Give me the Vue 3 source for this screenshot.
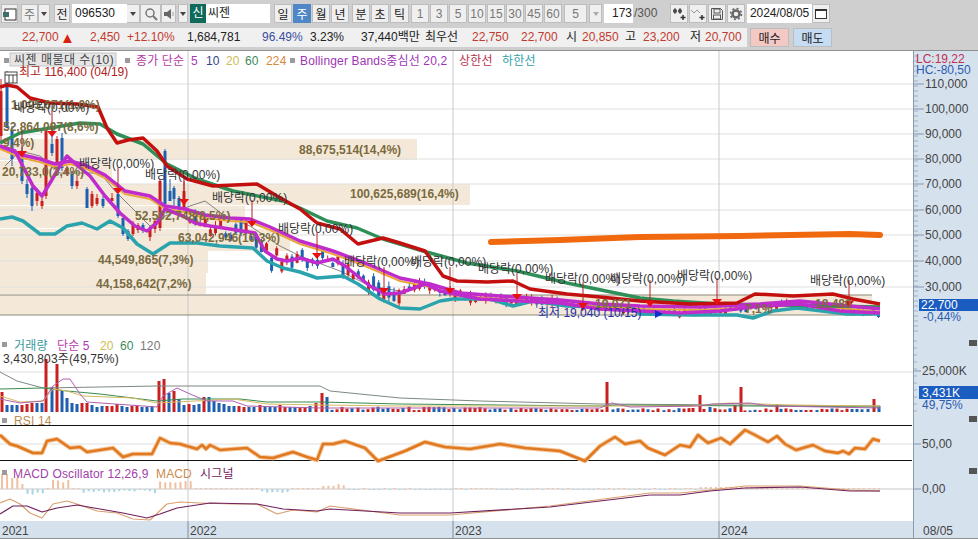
<script setup>
// 주봉 차트 화면 - 툴바 + 가격/거래량/RSI/MACD 패널
// 차트 좌표는 화면 좌표 그대로 사용 (viewBox로 패널 위치 맞춤)
const periods = [
  { t: "일", w: 18 }, { t: "주", w: 18, on: true }, { t: "월", w: 18 }, { t: "년", w: 18, gap: 1 },
  { t: "분", w: 18, gap: 3 }, { t: "초", w: 18 }, { t: "틱", w: 19 },
];
const minutes = ["1", "3", "5", "10", "15", "30", "45", "60"];

const stats = [
  { t: "22,700", x: 22, c: "red" }, { t: "▲", x: 60, c: "redstrong" }, { t: "2,450", x: 90, c: "red" },
  { t: "+12.10%", x: 127, c: "red" }, { t: "1,684,781", x: 187 }, { t: "96.49%", x: 262, c: "blue" },
  { t: "3.23%", x: 310 }, { t: "37,440백만", x: 361 }, { t: "최우선", x: 425 }, { t: "22,750", x: 472, c: "red" },
  { t: "22,700", x: 521, c: "red" }, { t: "시", x: 566 }, { t: "20,850", x: 582, c: "red" }, { t: "고", x: 625 },
  { t: "23,200", x: 643, c: "red" }, { t: "저", x: 690 }, { t: "20,700", x: 705, c: "red" },
];
const statCells = stats.map((s, i) => ({ ...s, w: (i < stats.length - 1 ? stats[i + 1].x : 747) - s.x }));

const pts = (a) => a.map((p) => p.join(",")).join(" ");

const redBand = [[0,86],[7,84],[17,86],[30,97],[50,102],[77,103],[98,106],[107,127],[117,142],[128,139],[143,137],[157,150],[167,165],[187,178],[213,185],[257,183],[277,195],[300,208],[317,222],[340,228],[358,243],[383,237],[400,242],[425,250],[443,275],[457,280],[487,281],[513,280],[530,288],[567,293],[600,296],[640,300],[690,303],[737,302],[755,293],[793,295],[833,293],[853,298],[880,303]];
const greenLine = [[0,142],[20,132],[50,127],[80,122],[100,123],[117,133],[143,143],[167,163],[197,178],[233,190],[283,200],[300,207],[327,220],[357,227],[383,238],[423,250],[467,262],[517,270],[567,282],[640,297],[673,300],[720,303],[780,304],[880,306]];
const upperMag = [[0,145],[22,154],[40,158],[55,163],[70,160],[85,164],[105,174],[125,190],[150,195],[165,205],[185,208],[205,214],[230,217],[250,218],[270,226],[300,240],[333,250],[365,262],[400,277],[430,283],[460,292],[500,295],[560,299],[600,303],[640,305],[700,306],[760,303],[800,300],[850,305],[880,308]];
const orangeThin = upperMag.map(([x, y]) => [x, y + 3]);
const lowerMag = [[0,145],[15,150],[33,185],[42,195],[50,182],[60,165],[67,155],[78,165],[90,175],[105,195],[120,212],[135,225],[147,230],[157,222],[165,208],[183,215],[195,222],[210,225],[230,228],[255,232],[265,250],[277,258],[287,260],[300,257],[317,262],[333,258],[345,265],[370,285],[385,293],[400,292],[425,283],[440,290],[480,298],[520,300],[560,302],[600,308],[640,310],[680,312],[720,310],[760,305],[800,303],[840,310],[880,312]];
const tealLine = [[0,218],[12,216],[23,220],[40,233],[55,233],[67,225],[82,222],[97,228],[110,220],[123,227],[137,243],[153,253],[170,242],[197,242],[220,245],[253,247],[267,260],[283,267],[300,271],[317,277],[343,275],[358,283],[380,298],[400,307],[420,308],[440,300],[453,298],[490,298],[513,305],[533,300],[567,305],[633,307],[640,313],[690,314],[737,314],[753,317],[773,310],[797,307],[847,313],[880,313]];
const thinGray = [[5,165],[20,150],[40,155],[60,172],[75,172],[100,172],[115,190],[135,210],[150,225],[165,215],[190,205],[205,200],[225,215],[250,225],[280,245],[300,255],[340,270],[370,285],[400,290]];
const longOrange = [[491,241],[560,239],[640,236],[740,235],[790,234],[850,233],[880,234]];

// 매물대 (y, 높이, 끝 x)
const profile = [
  [138, 21, 417], [160, 22, 112], [183, 21, 470], [205, 22, 245], [228, 22, 290], [250, 22, 208], [272, 21, 206], [294, 20, 872],
];
const grid = [83, 108, 133, 158, 183, 209, 234, 260, 286];

// 가까운 구간 보간
const interp = (line, x) => {
  for (let i = 1; i < line.length; i++) {
    if (x <= line[i][0]) {
      const [x0, y0] = line[i - 1];
      const [x1, y1] = line[i];
      return y0 + ((y1 - y0) * (x - x0)) / (x1 - x0);
    }
  }
  return line[line.length - 1][1];
};
const rnd = (n) => {
  const v = Math.sin(n * 12.9898) * 43758.5453;
  return v - Math.floor(v);
};

// x, 고가, 저가, 몸통 위, 몸통 아래, 양봉 여부
const handCandles = [
  [1,78,140,90,135,1],[7,70,127,73,127,0],[12,125,165,130,158,0],[22,146,183,150,180,0],[27,178,197,183,193,0],[32,183,210,187,205,0],[37,190,205,192,200,1],
  [42,195,208,200,205,1],[46,128,198,130,195,1],[52,128,155,143,152,0],[57,135,165,138,163,1],[62,132,170,137,167,0],[67,165,175,167,172,1],[72,170,188,173,185,0],[77,175,188,180,185,1],
  [87,186,207,188,207,0],[92,190,207,193,205,1],[97,193,205,197,203,1],[103,195,207,198,205,0],[112,192,200,197,200,1],[118,190,217,193,215,0],[123,217,235,217,233,0],[128,228,240,230,238,0],
  [133,220,235,223,233,1],[138,222,232,224,229,1],[143,222,232,224,230,0],[150,225,240,228,236,1],[155,218,232,220,228,1],[160,178,230,180,227,1],[165,148,205,150,203,0],[170,178,200,190,200,0],
  [174,185,205,187,198,0],[179,195,210,197,208,0],[184,180,210,190,207,1],
];
const candles = [...handCandles];
for (let x = 190, i = 0; x < 882; x += 5.1, i++) {
  const mid = interp(lowerMag, x);
  const size = x < 400 ? 12 : x < 560 ? 6 : 3;
  const h = 2 + rnd(i) * size;
  const off = (rnd(i + 200) - 0.5) * (x < 400 ? 18 : 4);
  const wick = x < 560 ? 4 : 1.5;
  const top = mid + off - h / 2;
  candles.push([x, top - rnd(i + 50) * wick - 1, top + h + rnd(i + 70) * wick, top, top + h, rnd(i + 90) > 0.5 ? 1 : 0]);
}

// 배당락 라벨과 화살표
const divLabels = [[14,111],[79,167],[145,178],[212,201],[278,232],[344,265],[411,265],[478,272],[545,282],[610,282],[677,279],[810,284]];
const arrows = [[22,150],[52,130],[118,187],[184,198],[252,220],[317,252],[384,287],[450,287],[517,293],[583,302],[650,300],[717,298],[849,300]];
const priceTexts = [
  { t: "88,675,514(14,4%)", x: 299, y: 153 }, { t: "100,625,689(16,4%)", x: 350, y: 197 },
  { t: "20,733,0(3,4%)", x: 2, y: 175 }, { t: "52,502,748(8,5%)", x: 135, y: 219 },
  { t: "63,042,946(10,3%)", x: 178, y: 241 }, { t: "44,549,865(7,3%)", x: 98, y: 263 },
  { t: "44,158,642(7,2%)", x: 96, y: 287 }, { t: "1,095,671(1,0%)", x: 11, y: 108 },
  { t: "52,864,097(8,6%)", x: 3, y: 130 }, { t: "9,4%)", x: 3, y: 146 },
  { t: "19,071", x: 595, y: 307 }, { t: "7,1%", x: 745, y: 312 }, { t: "18,480", x: 815, y: 307 },
];

const mainTicks = [["110,000",87],["100,000",112],["90,000",137],["80,000",162],["70,000",187],["60,000",213],["50,000",238],["40,000",264],["30,000",290]];
const minor = (from, to, step) => {
  const out = [];
  for (let y = from; y < to; y += step) out.push(y);
  return out;
};

// 거래량
const volHand = [[2,20,1],[7,7,0],[12,7,0],[17,7,0],[22,7,1],[27,8,1],[32,9,1],[37,9,0],[42,9,0],[46,53,1],[52,25,0],[57,48,1],[62,22,0],[67,14,0],[72,9,0],[77,8,0],[82,9,1],[87,9,1],[92,7,0],[97,5,0],[102,6,0],[107,6,1],[112,6,1],[117,8,1],[122,6,0],[127,5,0],[132,6,1],[137,6,1],[142,5,0],[147,5,0],[152,6,0],[159,31,1],[164,33,1],[169,19,0],[174,21,1],[179,13,0],[184,7,0],[189,8,1],[194,7,0],[199,8,0],[204,15,1],[209,15,0],[214,11,0],[219,9,0],[224,8,0],[229,6,0],[234,6,0],[239,6,1],[244,5,1],[249,5,0],[254,5,0],[260,7,1],[265,6,0],[270,5,0],[275,5,0],[280,7,1],[285,5,1],[290,5,0],[295,5,0],[300,5,1],[305,5,1],[310,6,0],[316,9,1],[322,19,1],[327,15,0]];
const spikes = { 607: [30, 1], 700: [17, 1], 741: [25, 1], 777: [8, 1], 874: [13, 1], 879: [6, 0], 693: [4, 1], 735: [7, 1], 710: [5, 0] };
const volBars = [...volHand];
for (let x = 332, i = 0; x < 875; x += 5.1, i++) {
  const near = Object.keys(spikes).find((k) => Math.abs(k - x) < 2.6);
  if (near) continue;
  volBars.push([Math.round(x), 1.5 + rnd(i + 300) * (x < 480 ? 4 : 2.5), rnd(i + 400) > 0.5 ? 1 : 0]);
}
Object.keys(spikes).forEach((k) => volBars.push([+k, spikes[k][0], spikes[k][1]]));

const vol120 = [[0,371],[17,380],[43,387],[157,385],[320,385],[330,390],[400,397],[480,400],[600,403],[880,405]];
const vol60 = [[0,388],[43,387],[67,390],[100,393],[157,400],[183,398],[240,398],[267,401],[320,401],[400,403],[600,405],[620,404],[880,406]];
const vol20 = [[0,395],[20,401],[43,400],[53,388],[67,390],[83,395],[133,397],[157,402],[233,398],[267,403],[320,404],[400,405],[690,405],[730,402],[790,404],[880,405]];
const vol5 = [[0,398],[20,402],[43,400],[53,385],[63,378],[70,378],[80,393],[87,401],[157,406],[163,395],[177,387],[190,393],[207,400],[233,400],[247,405],[320,407],[600,407],[612,402],[630,406],[700,405],[712,403],[750,402],[770,405],[880,407]];

const rsi = [[0,434],[10,443],[17,445],[33,452],[42,452],[47,440],[57,438],[70,447],[80,446],[87,451],[113,447],[123,456],[133,453],[152,453],[160,437],[170,442],[180,443],[197,448],[202,444],[206,448],[210,444],[220,449],[233,448],[247,447],[260,456],[273,457],[293,451],[307,456],[317,459],[323,443],[333,443],[345,440],[365,447],[378,460],[405,450],[425,441],[445,446],[470,448],[500,443],[525,447],[560,450],[585,460],[600,445],[615,436],[625,443],[640,440],[648,447],[665,454],[680,444],[690,446],[698,434],[708,442],[721,437],[730,443],[745,429],[755,434],[768,441],[777,435],[785,443],[796,449],[813,444],[825,450],[838,452],[843,450],[849,453],[855,447],[865,448],[873,438],[880,440]];

const macdHist = [];
for (let x = 2, i = 0; x < 882; x += 5.1, i++) {
  let h = 1;
  if (x < 12) h = 15;
  else if (x < 20) h = 11;
  else if (x < 25) h = 5;
  else if (x < 45) h = -(3 + rnd(i) * 4);
  else if (x >= 50 && x < 72) h = 6 + rnd(i) * 3;
  else if (x >= 80 && x < 155) h = -(1 + rnd(i) * 3);
  else if (x >= 158 && x < 192) h = 6 + rnd(i) * 2;
  else if (x >= 260 && x < 290) h = -(2 + rnd(i) * 2);
  else if (x >= 320 && x < 345) h = 3 + rnd(i) * 3;
  else if (x >= 700 && x < 770) h = 2;
  else if (x >= 345 && x < 700) h = rnd(i) > 0.5 ? 1 : -1;
  macdHist.push([x, h]);
}
const macdLine = [[0,502],[10,498],[20,503],[30,512],[42,517],[53,503],[67,500],[80,504],[97,510],[117,512],[133,518],[150,519],[167,503],[180,501],[200,502],[233,503],[257,503],[277,513],[293,509],[317,511],[330,505],[400,514],[450,514],[550,505],[650,492],[680,492],[710,489],[745,485],[800,485],[850,489],[880,490]];
const macdSignal = [[0,513],[13,505],[27,505],[42,511],[57,507],[77,504],[100,508],[123,512],[147,517],[160,513],[177,507],[210,502],[257,503],[283,508],[317,510],[330,508],[400,512],[450,512],[550,506],[650,494],[680,494],[710,490],[745,487],[800,486],[850,490],[880,490]];

const vGrid = [188, 453, 719];
const years = [["2021",2],["2022",190],["2023",455],["2024",721]];
</script>

<template>
  <div class="screen">
    <div class="tools">
      <button class="b w17 first">
        <svg width="14" height="14" viewBox="0 0 14 14"><rect x="2" y="2" width="11" height="11" fill="#fff" stroke="#333"/><rect x="0" y="5" width="6" height="5" fill="#3c6f6a"/></svg>
      </button>
      <button class="b w17 gap3 dim">주</button>
      <button class="b w12 drop"></button>
      <button class="b w16 gap4">전</button>
      <div class="field w55 gap2">096530</div>
      <button class="b w13 drop flush"></button>
      <button class="b w21">
        <svg width="14" height="14" viewBox="0 0 14 14"><circle cx="6" cy="6" r="4" fill="none" stroke="#777" stroke-width="1.5"/><path d="M9 9l4 4" stroke="#777" stroke-width="2"/></svg>
      </button>
      <button class="b w15">
        <svg width="12" height="12" viewBox="0 0 12 12"><path d="M1 4h3l4-3v10L4 8H1z" fill="#666"/><path d="M10 4v4" stroke="#999"/></svg>
      </button>
      <button class="b w10 gap2 drop"></button>
      <div class="badge gap2">신</div>
      <div class="field name">씨젠</div>
      <button v-for="(p, i) in periods" :key="p.t" class="b" :class="{ on: p.on }"
        :style="{ width: p.w + 'px', marginLeft: (i === 0 ? 4 : p.gap === 3 ? 3 : 1) + 'px' }">{{ p.t }}</button>
      <button v-for="(m, i) in minutes" :key="m" class="b w18 dim thin" :class="i === 0 ? 'gap2' : 'gap1'">{{ m }}</button>
      <button class="b w23 gap2 dim">5</button>
      <button class="b w13 gap2 drop pale"></button>
      <div class="field w29 gap2 right">173</div>
      <span class="total">/300</span>
      <button class="b w18 gap11">
        <svg width="14" height="14" viewBox="0 0 14 14"><circle cx="3" cy="4" r="2" fill="#444"/><circle cx="8" cy="4" r="2" fill="#444"/><path d="M3 1v6M8 1v6" stroke="#444"/><path d="M11 8v5M8.500 10.500h5" stroke="#333" stroke-width="1.500"/></svg>
      </button>
      <button class="b w18 gap1">
        <svg width="14" height="14" viewBox="0 0 14 14"><path d="M0 3l3 3 3-3 3 3" fill="none" stroke="#999"/><path d="M11 8v5M8.500 10.500h5" stroke="#333" stroke-width="1.500"/></svg>
      </button>
      <button class="b w18 gap1">
        <svg width="14" height="14" viewBox="0 0 14 14"><path d="M1.500 1.500h9l2 2v9h-11z" fill="none" stroke="#555"/><rect x="4" y="2" width="6" height="4" fill="none" stroke="#555"/><rect x="3.500" y="8" width="7" height="4" fill="none" stroke="#555"/></svg>
      </button>
      <button class="b w18 gap1">
        <svg width="14" height="14" viewBox="0 0 14 14"><circle cx="7" cy="7" r="3.500" fill="none" stroke="#666" stroke-width="2.500"/><circle cx="7" cy="7" r="5.500" fill="none" stroke="#666" stroke-width="1.600" stroke-dasharray="2 2.300"/></svg>
      </button>
      <div class="field w65 gap2 date">2024/08/05</div>
      <button class="b w18">
        <svg width="14" height="13" viewBox="0 0 14 13"><rect x="1.500" y="2.500" width="11" height="9" fill="#fff" stroke="#333"/><rect x="1" y="2" width="12" height="2" fill="#333"/></svg>
      </button>
    </div>

    <div class="quote">
      <div class="cells">
        <span v-for="(s, i) in statCells" :key="i" :class="s.c" :style="{ width: s.w + 'px' }">{{ s.t }}</span>
      </div>
      <button class="trade buy">매수</button>
      <button class="trade sell">매도</button>
    </div>

    <!-- 가격 -->
    <div class="pane main">
      <svg class="plot" width="914" height="285" viewBox="0 50 914 285">
        <rect v-for="p in profile" :key="p[0]" x="0" :y="p[0]" :width="p[2]" :height="p[1]" fill="#f4e9d8" />
        <line v-for="y in grid" :key="y" x1="0" x2="914" :y1="y" :y2="y" stroke="#dfdfdf" />
        <line v-for="x in vGrid" :key="x" :x1="x" :x2="x" y1="50" y2="335" stroke="#c9c9c9" />
        <line x1="0" x2="872" y1="294" y2="294" stroke="#8c8778" />
        <line x1="0" x2="872" y1="314" y2="314" stroke="#8c8778" />
        <polyline :points="pts(thinGray)" fill="none" stroke="#666" stroke-width="0.8" />
        <g v-for="(c, i) in candles" :key="i">
          <line :x1="c[0]" :x2="c[0]" :y1="c[1]" :y2="c[2]" :stroke="c[5] ? '#c82020' : '#1f5fb0'" />
          <rect :x="c[0] - 1.500" :y="c[3]" width="3" :height="c[4] - c[3]" :fill="c[5] ? '#c82020' : '#1f5fb0'" />
        </g>
        <polyline :points="pts(tealLine)" class="ln" stroke="#2aa3ad" stroke-width="3.500" />
        <polyline :points="pts(orangeThin)" class="ln" stroke="#e8a63a" stroke-width="2" />
        <polyline :points="pts(greenLine)" class="ln" stroke="#2f8f58" stroke-width="3.500" />
        <polyline :points="pts(upperMag)" class="ln" stroke="#c02ccc" stroke-width="3.500" />
        <polyline :points="pts(lowerMag)" class="ln" stroke="#c02ccc" stroke-width="3.500" />
        <polyline :points="pts(redBand)" class="ln" stroke="#c40f0f" stroke-width="3.500" />
        <polyline :points="pts(longOrange)" class="ln" stroke="#f0690f" stroke-width="6" stroke-linecap="round" />
        <g v-for="a in arrows" :key="a[0]">
          <line :x1="a[0]" :x2="a[0]" :y1="a[1] - 21" :y2="a[1]" stroke="#b02020" />
          <polygon :points="`${a[0] - 5},${a[1]} ${a[0] + 5},${a[1]} ${a[0]},${a[1] + 6}`" fill="#e81010" />
        </g>
        <text v-for="(p, i) in priceTexts" :key="i" :x="p.x" :y="p.y" class="vol-label">{{ p.t }}</text>
        <text v-for="d in divLabels" :key="d[0]" :x="d[0]" :y="d[1]" class="div-label">배당락(0,00%)</text>
        <text x="538" y="316" class="low-label">최저 19,040 (10/15)</text>
        <polygon points="655,309 663,313 655,317" fill="#1030d0" />
        <rect x="10" y="52" width="106" height="13" fill="#e6e6e6" stroke="#c4c4c4" />
        <text x="19" y="75" class="high-label">최고 116,400 (04/19)</text>
        <rect x="5" y="71" width="12" height="11" fill="#fff" stroke="#444" />
        <path d="M5 74h12M9 74v8M13 74v8" stroke="#444" fill="none" />
        <rect x="4" y="57" width="5" height="5" fill="#9a9a9a" />
        <text x="14" y="63" class="lg first-lg" fill="#444">씨젠 매물대 수(10)</text>
        <rect x="125" y="57" width="5" height="5" fill="#9a9a9a" />
        <text x="136" y="64" class="lg" fill="#b53aa8">종가 단순</text>
        <text x="191" y="64" class="lg" fill="#a33ab0">5</text>
        <text x="206" y="64" class="lg" fill="#334488">10</text>
        <text x="226" y="64" class="lg" fill="#cdbb55">20</text>
        <text x="245" y="64" class="lg" fill="#3c8a5a">60</text>
        <text x="266" y="64" class="lg" fill="#d8883a">224</text>
        <rect x="290" y="57" width="5" height="5" fill="#9a9a9a" />
        <text x="300" y="64" class="lg" fill="#a034b8">Bollinger Bands중심선 20,2</text>
        <text x="459" y="64" class="lg" fill="#b8304a">상한선</text>
        <text x="502" y="64" class="lg" fill="#2fa0a8">하한선</text>
      </svg>
      <svg class="axis" width="64" height="285" viewBox="914 50 64 285">
        <line v-for="y in minor(55, 335, 5)" :key="y" x1="914" x2="918" :y1="y" :y2="y" stroke="#9fb0c4" />
        <g v-for="t in mainTicks" :key="t[0]">
          <line x1="914" x2="924" :y1="t[1] - 4" :y2="t[1] - 4" stroke="#8497ad" />
          <text x="925" :y="t[1]" class="tick">{{ t[0] }}</text>
        </g>
        <text x="916" y="62" class="tick t-red">LC:19,22</text>
        <text x="916" y="73" class="tick t-blue">HC:-80,50</text>
        <rect x="919" y="298" width="59" height="12" fill="#1a5cc0" />
        <text x="921" y="308" class="tick t-white">22,700</text>
        <text x="923" y="320" class="tick t-blue">-0,44%</text>
      </svg>
    </div>

    <!-- 거래량 -->
    <div class="pane volume">
      <svg class="plot" width="914" height="76" viewBox="0 335 914 76">
        <line x1="0" x2="914" y1="371" y2="371" stroke="#dfdfdf" />
        <line v-for="x in vGrid" :key="x" :x1="x" :x2="x" y1="335" y2="411" stroke="#c9c9c9" />
        <rect v-for="(b, i) in volBars" :key="i" :x="b[0] - 1.500" :y="411 - b[1]" width="3" :height="b[1]" :fill="b[2] ? '#c82020' : '#1f5fb0'" />
        <polyline :points="pts(vol120)" class="ln" stroke="#7c8a80" stroke-width="1" />
        <polyline :points="pts(vol60)" class="ln" stroke="#3a8a50" stroke-width="1" />
        <polyline :points="pts(vol20)" class="ln" stroke="#d4bb60" stroke-width="1" />
        <polyline :points="pts(vol5)" class="ln" stroke="#b060b0" stroke-width="1" />
        <rect x="2" y="341" width="5" height="5" fill="#9a9a9a" />
        <text x="14" y="349" class="lg" fill="#3a9a9a">거래량</text>
        <text x="57" y="349" class="lg" fill="#b53aa8">단순 5</text>
        <text x="100" y="349" class="lg" fill="#cdbb55">20</text>
        <text x="120" y="349" class="lg" fill="#3c8a5a">60</text>
        <text x="140" y="349" class="lg" fill="#777">120</text>
        <text x="3" y="362" class="lg" fill="#333">3,430,803주(49,75%)</text>
      </svg>
      <svg class="axis" width="64" height="76" viewBox="914 335 64 76">
        <line v-for="y in minor(340, 411, 7)" :key="y" x1="914" x2="917" :y1="y" :y2="y" stroke="#9fb0c4" />
        <line x1="914" x2="921" y1="370" y2="370" stroke="#8497ad" />
        <text x="922" y="374" class="tick">25,000K</text>
        <rect x="919" y="385" width="59" height="13" fill="#1a5cc0" />
        <text x="922" y="396" class="tick t-white">3,431K</text>
        <text x="922" y="408" class="tick t-blue">49,75%</text>
        <rect x="969" y="339" width="8" height="6" fill="#555" />
      </svg>
    </div>

    <!-- RSI -->
    <div class="pane rsi">
      <svg class="plot" width="914" height="52" viewBox="0 411 914 52">
        <line x1="0" x2="914" y1="443" y2="443" stroke="#dfdfdf" />
        <line v-for="x in vGrid" :key="x" :x1="x" :x2="x" y1="411" y2="463" stroke="#c9c9c9" />
        <line x1="0" x2="912" y1="424.500" y2="424.500" stroke="#111" />
        <line x1="0" x2="912" y1="459.500" y2="459.500" stroke="#111" />
        <polyline :points="pts(rsi)" class="ln" stroke="#f6c79c" stroke-width="4.500" />
        <polyline :points="pts(rsi)" class="ln" stroke="#e07a22" stroke-width="2.500" />
        <rect x="2" y="417" width="5" height="5" fill="#9a9a9a" />
        <text x="14" y="424" class="lg" fill="#c08a50">RSI 14</text>
      </svg>
      <svg class="axis" width="64" height="52" viewBox="914 411 64 52">
        <line x1="914" x2="921" y1="443" y2="443" stroke="#8497ad" />
        <text x="922" y="447" class="tick">50,00</text>
        <rect x="969" y="415" width="8" height="6" fill="#555" />
      </svg>
    </div>

    <!-- MACD -->
    <div class="pane macd">
      <svg class="plot" width="914" height="57" viewBox="0 463 914 57">
        <line x1="0" x2="914" y1="488" y2="488" stroke="#c9c9c9" />
        <line v-for="x in vGrid" :key="x" :x1="x" :x2="x" y1="463" y2="520" stroke="#c9c9c9" />
        <rect v-for="(h, i) in macdHist" :key="i" :x="h[0] - 1" :y="h[1] > 0 ? 488 - h[1] : 488" width="2" :height="Math.abs(h[1])" :fill="h[1] > 0 ? '#f0c0a0' : '#a8d4e4'" />
        <polyline :points="pts(macdLine)" class="ln" stroke="#d8a070" stroke-width="1.200" />
        <polyline :points="pts(macdSignal)" class="ln" stroke="#70205a" stroke-width="1.200" />
        <rect x="2" y="469" width="5" height="5" fill="#9a9a9a" />
        <text x="13" y="477" class="lg" fill="#a040a8">MACD Oscillator 12,26,9</text>
        <text x="156" y="477" class="lg" fill="#cc8a50">MACD</text>
        <text x="200" y="477" class="lg" fill="#70205a">시그널</text>
      </svg>
      <svg class="axis" width="64" height="57" viewBox="914 463 64 57">
        <line x1="914" x2="921" y1="488" y2="488" stroke="#8497ad" />
        <text x="922" y="492" class="tick">0,00</text>
        <rect x="969" y="467" width="8" height="6" fill="#555" />
      </svg>
    </div>

    <div class="pane xaxis">
      <svg class="plot" width="914" height="17" viewBox="0 520 914 17">
        <line v-for="x in vGrid" :key="x" :x1="x" :x2="x" y1="520" y2="537" stroke="#7f8c9c" />
        <text v-for="y in years" :key="y[0]" :x="y[1]" y="534" class="tick">{{ y[0] }}</text>
      </svg>
      <svg class="axis" width="64" height="17" viewBox="914 520 64 17">
        <text x="923" y="534" class="tick">08/05</text>
      </svg>
    </div>
  </div>
</template>

<style scoped>
.screen {
  width: 978px;
  height: 539px;
  overflow: hidden;
  background: #c8c8c8;
  font-family: "Liberation Sans", "Noto Sans CJK KR", sans-serif;
  font-size: 12px;
  color: #222;
}
.tools {
  height: 19px;
  padding-top: 4px;
  padding-bottom: 5px;
  display: flex;
  align-items: stretch;
  background: #cfcfcf;
}
.b {
  box-sizing: border-box;
  padding: 0;
  margin: 0;
  border: 1px solid #bdbdbd;
  background: #efefef;
  font: inherit;
  color: #222;
  display: flex;
  align-items: center;
  justify-content: center;
  flex: none;
}
.b.on {
  background: #4f86c6;
  border-color: #4f86c6;
  color: #fff;
}
.dim { color: #777; }
.thin { font-size: 12px; }
.first { margin-left: 1px; }
.drop { position: relative; }
.drop::after {
  content: "";
  border-left: 3px solid transparent;
  border-right: 3px solid transparent;
  border-top: 4px solid #444;
}
.pale::after { border-top-color: #aaa; }
.flush { border-left: 0; }
.w10 { width: 10px; } .w12 { width: 12px; } .w13 { width: 13px; } .w15 { width: 15px; }
.w16 { width: 16px; } .w17 { width: 17px; } .w18 { width: 18px; } .w21 { width: 21px; }
.w23 { width: 23px; } .w29 { width: 29px; } .w55 { width: 55px; } .w65 { width: 65px; }
.gap1 { margin-left: 1px; } .gap2 { margin-left: 2px; } .gap3 { margin-left: 3px; }
.gap4 { margin-left: 4px; } .gap11 { margin-left: 11px; }
.field {
  box-sizing: border-box;
  background: #fff;
  flex: none;
  line-height: 19px;
  padding-left: 3px;
  overflow: hidden;
}
.field.right { text-align: right; padding: 0 1px 0 0; }
.field.date { padding-left: 3px; letter-spacing: -0.1px; }
.name {
  width: 64px;
  padding-left: 2px;
  color: #222;
}
.badge {
  width: 16px;
  flex: none;
  background: #0f6a5c;
  color: #fff;
  text-align: center;
  line-height: 19px;
}
.total {
  width: 26px;
  flex: none;
  line-height: 19px;
  padding-left: 1px;
  color: #555;
  box-sizing: border-box;
}
.quote {
  height: 19px;
  padding-bottom: 3px;
  display: flex;
  background: #cfcfcf;
}
.cells {
  width: 747px;
  display: flex;
  padding-left: 0;
  background: #f0f0f0;
  line-height: 19px;
}
.cells span {
  flex: none;
  white-space: nowrap;
  overflow: hidden;
}
.cells span:first-child { margin-left: 22px; }
.red { color: #c23a2e; }
.cells .redstrong { color: #d8200c; font-size: 15px; }
.blue { color: #3a4ea0; }
.trade {
  width: 39px;
  padding: 0;
  border: 1px solid #bdbdbd;
  font: inherit;
  color: #222;
}
.buy { margin-left: 3px; background: #f4c9c4; }
.sell { margin-left: 4px; background: #c5dcf2; }
.pane {
  display: flex;
  border-top: 1px solid #8f8f8f;
  box-sizing: border-box;
}
.plot { background: #fff; flex: none; display: block; }
.axis {
  flex: none;
  display: block;
  background: #d6e1ee;
  border-left: 1px solid #8f9aa8;
  box-sizing: content-box;
  margin-left: -1px;
}
.xaxis .plot, .xaxis .axis { background: #d6e1ee; }
.main { height: 285px; }
.volume { height: 76px; }
.rsi { height: 52px; }
.macd { height: 57px; }
.xaxis { height: 17px; border-bottom: 1px solid #8f8f8f; box-sizing: content-box; }
.ln {
  fill: none;
  stroke-linejoin: round;
}
.lg { font-size: 12px; letter-spacing: 0.15px; }
.first-lg { letter-spacing: 0.5px; }
.tick { font-size: 12px; fill: #444; }
.t-red { fill: #c0304a; }
.t-blue { fill: #2a5cb0; }
.t-white { fill: #fff; }
.vol-label { font-size: 12px; font-weight: 700; fill: #7a6a40; }
.div-label { font-size: 12px; fill: #333; }
.low-label { font-size: 12px; fill: #2030a8; }
.high-label { font-size: 12px; fill: #b02020; }
</style>
